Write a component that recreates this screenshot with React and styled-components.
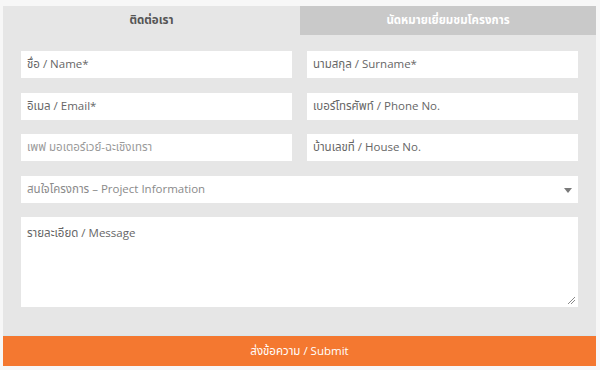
import React from "react";
import styled, { createGlobalStyle } from "styled-components";

const Global = createGlobalStyle`
  html, body { margin: 0; padding: 0; background: #f7f7f7; }
  body { font-family: "Open Sans", "Noto Sans Thai", "Noto Sans", sans-serif; }
`;

const Wrap = styled.div`
  padding: 6px 0 0 3px;
  width: 593px;
`;

const Tabs = styled.div`
  display: grid;
  grid-template-columns: 297px 296px;
  height: 29px;
`;

const Tab = styled.div`
  display: flex;
  align-items: center;
  justify-content: center;
  font-size: 11.5px;
  font-weight: 700;
  background: ${(p) => (p.$active ? "#e6e6e6" : "#c9c9c9")};
  color: ${(p) => (p.$active ? "#555555" : "#ffffff")};
`;

const Panel = styled.form`
  background: #e6e6e6;
  padding: 16px 18px 28px 18px;
  display: grid;
  grid-template-columns: 1fr 1fr;
  column-gap: 15px;
  row-gap: 14.5px;
  margin: 0;
`;

const Field = styled.div`
  height: 27px;
  background: #ffffff;
  display: flex;
  align-items: center;
  padding: 0 6px;
  font-size: 11.5px;
  color: ${(p) => p.$color || "#666666"};
  grid-column: ${(p) => (p.$wide ? "1 / -1" : "auto")};
  position: relative;
`;

const Arrow = styled.span`
  position: absolute;
  right: 6px;
  top: 12px;
  width: 0;
  height: 0;
  border-left: 4.5px solid transparent;
  border-right: 4.5px solid transparent;
  border-top: 5px solid #7a7a7a;
`;

const Message = styled.div`
  grid-column: 1 / -1;
  height: 90px;
  background: #ffffff;
  padding: 8px 6px;
  box-sizing: border-box;
  font-size: 11.5px;
  color: #666666;
  position: relative;
`;

const Grip = styled.svg`
  position: absolute;
  right: 2px;
  bottom: 2px;
`;

const Submit = styled.div`
  height: 31px;
  background: #f47830;
  border-top: 1px solid #d9e6ec;
  box-sizing: border-box;
  display: flex;
  align-items: center;
  justify-content: center;
  color: #ffffff;
  font-size: 11.5px;
`;

export default function App() {
  return (
    <>
      <Global />
      <Wrap>
        <Tabs>
          <Tab $active>ติดต่อเรา</Tab>
          <Tab>นัดหมายเยี่ยมชมโครงการ</Tab>
        </Tabs>
        <Panel>
          <Field>ชื่อ / Name*</Field>
          <Field>นามสกุล / Surname*</Field>
          <Field>อิเมล / Email*</Field>
          <Field>เบอร์โทรศัพท์ / Phone No.</Field>
          <Field $color="#9a9a9a">เพฟ มอเตอร์เวย์-ฉะเชิงเทรา</Field>
          <Field>บ้านเลขที่ / House No.</Field>
          <Field $wide $color="#8a8a8a">
            สนใจโครงการ – Project Information
            <Arrow />
          </Field>
          <Message>
            รายละเอียด / Message
            <Grip width="9" height="9" viewBox="0 0 9 9">
              <path d="M1 8 L8 1 M4 8 L8 4" stroke="#8a8a8a" strokeWidth="1" />
            </Grip>
          </Message>
        </Panel>
        <Submit>ส่งข้อความ / Submit</Submit>
      </Wrap>
    </>
  );
}
